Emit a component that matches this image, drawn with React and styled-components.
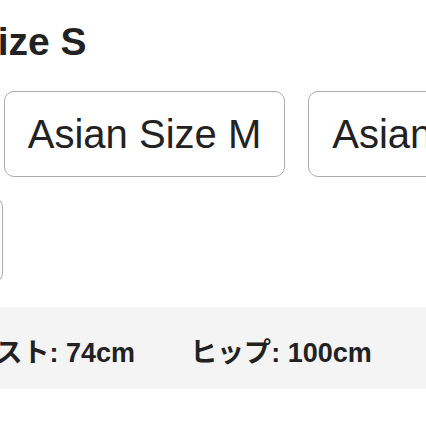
import React from 'react';
import styled, { createGlobalStyle } from 'styled-components';

const GlobalStyle = createGlobalStyle`
  html, body {
    margin: 0;
    padding: 0;
    background: #ffffff;
    overflow: hidden;
  }
  body {
    font-family: "Liberation Sans", "Noto Sans CJK JP", sans-serif;
    color: #222222;
  }
`;

const Viewport = styled.div`
  width: 426px;
  height: 426px;
  overflow: hidden;
`;

const Main = styled.div`
  width: 900px;
  margin-left: -294px;
  padding-top: 18px;
`;

const Title = styled.h1`
  margin: 0;
  padding-left: 9px;
  font-size: 39px;
  line-height: 47px;
  font-weight: 700;
  color: #222222;
  white-space: nowrap;
`;

const SizeList = styled.div`
  width: 880px;
  margin-top: 26px;
  display: flex;
  flex-wrap: wrap;
  column-gap: 23px;
  row-gap: 20px;
`;

const SizeButton = styled.button`
  height: 86px;
  box-sizing: border-box;
  padding: 0 23px;
  border: 1.5px solid #ababab;
  border-radius: 10px;
  background: #ffffff;
  font-family: inherit;
  font-size: 40px;
  font-weight: 400;
  color: #222222;
  white-space: nowrap;
  display: flex;
  align-items: center;
`;

const Measurements = styled.div`
  margin-top: 24px;
  height: 82px;
  box-sizing: border-box;
  padding: 30px 0 0 14px;
  background: #f4f4f4;
  display: flex;
  align-items: flex-start;
  gap: 55px;
`;

const Measure = styled.span`
  font-size: 27px;
  line-height: 32px;
  font-weight: 700;
  color: #222222;
  white-space: nowrap;
`;

const sizes = ['Asian Size S', 'Asian Size M', 'Asian Size L', 'Asian Size XL'];
const measures = [
  ['バスト', '84cm'],
  ['ウエスト', '74cm'],
  ['ヒップ', '100cm'],
];

const App = () => {
  return (
    <Viewport>
      <GlobalStyle />
      <Main>
        <Title>サイズ: Asian Size S</Title>
        <SizeList>
          {sizes.map((s) => (
            <SizeButton key={s}>{s}</SizeButton>
          ))}
        </SizeList>
        <Measurements>
          {measures.map(([label, value]) => (
            <Measure key={label}>
              {label}: {value}
            </Measure>
          ))}
        </Measurements>
      </Main>
    </Viewport>
  );
};

export default App;
